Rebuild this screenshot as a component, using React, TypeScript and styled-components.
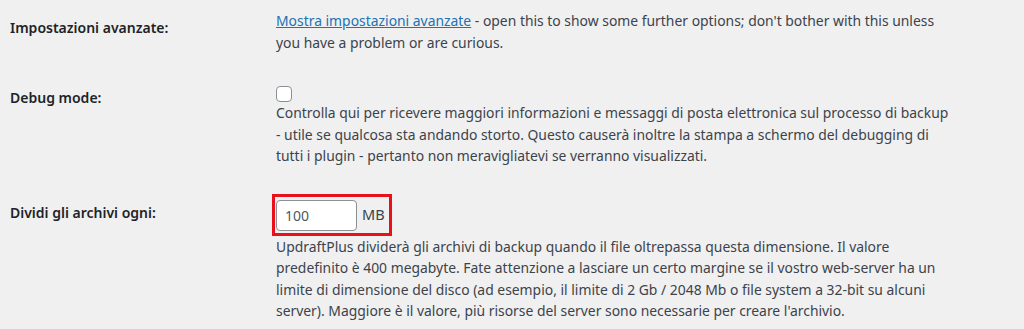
import React from 'react'
import styled, { createGlobalStyle } from 'styled-components'

const GlobalStyle = createGlobalStyle`
  html, body {
    margin: 0;
    padding: 0;
    background: #f0f0f1;
  }
  body {
    font-family: 'Noto Sans', 'Open Sans', sans-serif;
    color: #3c434a;
  }
`

const Page = styled.div`
  width: 1024px;
  height: 329px;
  overflow: hidden;
  padding-top: 10px;
  box-sizing: border-box;
`

const Row = styled.div<{ $gap: number }>`
  display: grid;
  grid-template-columns: 266px 1fr;
  padding-left: 10px;
  margin-bottom: ${(p) => p.$gap}px;
`

const Label = styled.div<{ $top: number }>`
  padding-top: ${(p) => p.$top}px;
  font-size: 14px;
  line-height: 20px;
  font-weight: 600;
  color: #1d2327;
  white-space: nowrap;
`

const Value = styled.div`
  font-size: 13.9px;
  line-height: 21.5px;
  color: #3c434a;
`

const Line = styled.span`
  display: block;
  white-space: nowrap;
`

const Link = styled.a`
  color: #2271b1;
  text-decoration: underline;
  cursor: pointer;
`

const Checkbox = styled.input.attrs({ type: 'checkbox' })`
  appearance: none;
  display: block;
  margin: 0;
  width: 16px;
  height: 16px;
  border: 1px solid #8c8f94;
  border-radius: 4px;
  background: #fff;
  box-sizing: border-box;
`

const Highlight = styled.div`
  display: inline-flex;
  align-items: center;
  gap: 5px;
  border: 3px solid #e8101a;
  padding: 3px 4px 2px 1px;
  margin-left: -4px;
`

const NumberInput = styled.input`
  width: 81px;
  height: 31px;
  box-sizing: border-box;
  margin: 0;
  padding: 0 8px;
  border: 1px solid #8c8f94;
  border-radius: 4px;
  background: #fff;
  font-family: inherit;
  font-size: 14px;
  color: #50575e;
  outline: none;
`

const Unit = styled.span`
  font-size: 14.5px;
  color: #3c434a;
`

export default function App() {
  return (
    <Page>
      <GlobalStyle />
      <Row $gap={33}>
        <Label $top={8}>Impostazioni avanzate:</Label>
        <Value>
          <Line>
            <Link>Mostra impostazioni avanzate</Link> - open this to show some further options; don't bother with this unless
          </Line>
          <Line>you have a problem or are curious.</Line>
        </Value>
      </Row>
      <Row $gap={27}>
        <Label $top={2}>Debug mode:</Label>
        <Value>
          <Checkbox />
          <Line>Controlla qui per ricevere maggiori informazioni e messaggi di posta elettronica sul processo di backup</Line>
          <Line>- utile se qualcosa sta andando storto. Questo causerà inoltre la stampa a schermo del debugging di</Line>
          <Line>tutti i plugin - pertanto non meravigliatevi se verranno visualizzati.</Line>
        </Value>
      </Row>
      <Row $gap={0}>
        <Label $top={9}>Dividi gli archivi ogni:</Label>
        <Value>
          <Highlight>
            <NumberInput defaultValue="100" />
            <Unit>MB</Unit>
          </Highlight>
          <Line>UpdraftPlus dividerà gli archivi di backup quando il file oltrepassa questa dimensione. Il valore</Line>
          <Line>predefinito è 400 megabyte. Fate attenzione a lasciare un certo margine se il vostro web-server ha un</Line>
          <Line>limite di dimensione del disco (ad esempio, il limite di 2 Gb / 2048 Mb o file system a 32-bit su alcuni</Line>
          <Line>server). Maggiore è il valore, più risorse del server sono necessarie per creare l'archivio.</Line>
        </Value>
      </Row>
    </Page>
  )
}
